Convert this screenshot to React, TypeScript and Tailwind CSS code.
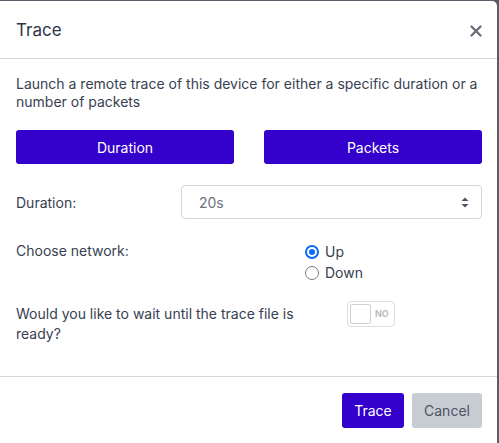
import { useState } from "react";

const App: React.FC = () => {
	const [mode, setMode] = useState("duration");
	const [net, setNet] = useState("up");

	return (
		<div className="w-[499px] h-[443px] bg-[#5c5c68] overflow-hidden" style={{ fontFamily: "Inter, 'Liberation Sans', sans-serif" }}>
			<div className="w-[497px] h-[443px] mt-px bg-white rounded-tr-[5px] flex flex-col">
				{/* header */}
				<div className="h-[58px] pl-4 pr-[15px] pt-[3px] flex items-center justify-between border-b border-[#d6d8dd]">
					<h2 className="text-[17px] text-[#2d3748]">Trace</h2>
					<button className="text-[#6b6f78]">
						<svg width="12" height="12" viewBox="0 0 12 12">
							<path d="M1.5 1.5 L10.5 10.5 M10.5 1.5 L1.5 10.5" stroke="currentColor" strokeWidth="2.4" strokeLinecap="round" />
						</svg>
					</button>
				</div>

				{/* body */}
				<div className="pl-4 pr-[15px] pt-[16px] flex-1 text-[14px] text-[#374151] border-b border-[#d6d8dd]">
					<p className="leading-[18px]">
						Launch a remote trace of this device for either a specific duration or a number of packets
					</p>

					<div className="flex gap-[30px] mt-[19px]">
						<button
							onClick={() => setMode("duration")}
							className="flex-1 h-[34px] bg-[#3300cc] text-white rounded-[3px]"
						>
							Duration
						</button>
						<button
							onClick={() => setMode("packets")}
							className="flex-1 h-[34px] bg-[#3300cc] text-white rounded-[3px]"
						>
							Packets
						</button>
					</div>

					<div className="flex items-center mt-[21px]">
						<span className="w-[165px]">Duration:</span>
						<div className="flex-1 h-[34px] border border-[#d4d6da] rounded-[4px] flex items-center justify-between pl-[17px] pr-[12px] text-[#6b7280]">
							<span>{mode === "duration" ? "20s" : "100"}</span>
							<svg width="8" height="11" viewBox="0 0 8 11">
								<path d="M4 0.5 L7.5 4 H0.5 Z M4 10.5 L7.5 7 H0.5 Z" fill="#4b5563" />
							</svg>
						</div>
					</div>

					<div className="flex mt-[22px]">
						<span className="w-[289px] leading-[20px]">Choose network:</span>
						<div className="flex flex-col leading-[21px]">
							{["up", "down"].map((n) => (
								<label key={n} className="flex items-center gap-[6px] cursor-pointer" onClick={() => setNet(n)}>
									{net === n ? (
										<span className="w-[14px] h-[14px] rounded-full border-[2px] border-[#0a6cf5] flex items-center justify-center">
											<span className="w-[6px] h-[6px] rounded-full bg-[#0a6cf5]" />
										</span>
									) : (
										<span className="w-[14px] h-[14px] rounded-full border-[1.5px] border-[#7a7d85]" />
									)}
									<span>{n === "up" ? "Up" : "Down"}</span>
								</label>
							))}
						</div>
					</div>

					<div className="flex mt-[21px]">
						<p className="w-[290px] leading-[20px]">Would you like to wait until the trace file is ready?</p>
						<div className="ml-[41px] mt-[-3px] w-[48px] h-[26px] border border-[#dcdee2] rounded-[4px] flex items-center px-[2px]">
							<span className="w-[21px] h-[20px] border border-[#cfd1d6] rounded-[2px]" />
							<span className="ml-[4px] text-[9px] font-bold text-[#b9bcc2]">NO</span>
						</div>
					</div>
				</div>

				{/* footer */}
				<div className="h-[67px] pl-4 pr-[15px] flex items-center justify-end gap-2 text-[14px]">
					<button className="h-[35px] w-[62px] bg-[#3300cc] text-white rounded-[3px]">Trace</button>
					<button className="h-[35px] w-[70px] bg-[#c8ccd3] text-[#4b5563] rounded-[3px]">Cancel</button>
				</div>
			</div>
		</div>
	);
};

export default App;
